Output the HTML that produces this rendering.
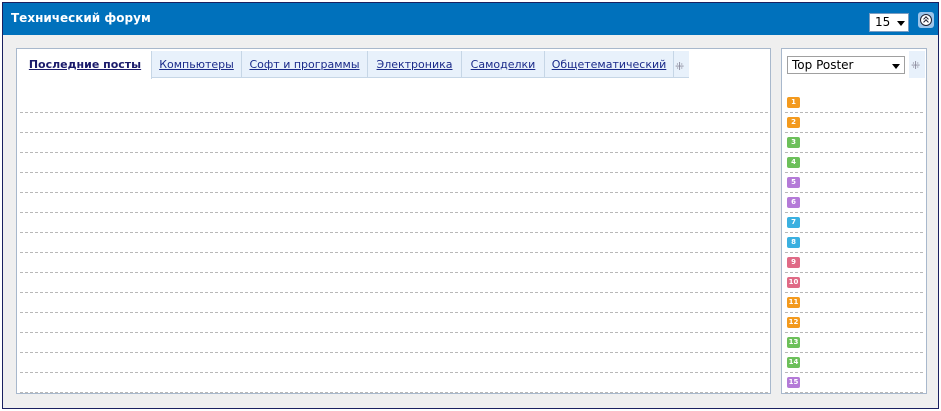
<!DOCTYPE html>
<html><head><meta charset="utf-8"><style>
*{margin:0;padding:0;box-sizing:border-box}
body{width:941px;height:411px;background:#fff;font-family:"DejaVu Sans","Liberation Sans",sans-serif;position:relative;overflow:hidden}
.outer{position:absolute;left:2px;top:2px;width:937px;height:407px;border:1px solid #1a2060;background:#efefef}
.hdr{position:absolute;left:0;top:0;width:935px;height:32px;background:#0071bc;color:#fff;font-weight:bold;font-size:12px;line-height:31px;padding-left:8px}
.sel{position:absolute;left:866px;top:10px;width:40px;height:19px;background:#fff;border:1px solid #7a9cc0;font-size:12px;color:#000;line-height:17px;padding-left:5px;font-weight:normal}
.arr{position:absolute;width:0;height:0;border-left:4px solid transparent;border-right:4px solid transparent;border-top:5px solid #000}
.up{position:absolute;left:915px;top:9px;width:16px;height:16px;background:#9cc4ea;border-radius:3px}
.up span{position:absolute;left:2px;top:2px;width:12px;height:12px;border-radius:50%;background:#fff;border:1px solid #223}
.up i{position:absolute;left:3px;width:4px;height:4px;border-left:1.5px solid #223;border-top:1.5px solid #223;transform:rotate(45deg)}
.pl{position:absolute;left:16px;top:48px;width:755px;height:346px;border:1px solid #a8b8cc;background:#fff}
.pr{position:absolute;left:781px;top:48px;width:146px;height:346px;border:1px solid #a8b8cc;background:#fff}
.tabs{position:absolute;left:2px;top:2px;width:670px;height:27px;background:#e8f1fb;border-bottom:1px solid #c6d6e6}
.tab{position:absolute;top:0;height:27px;border-right:1px solid #c6d6e6;font-size:11px;color:#1a2a8a;text-decoration:underline;line-height:27px;text-align:center;white-space:nowrap}
.act{background:#fff;font-weight:bold;color:#1a1a6a;height:28px}
.dl{position:absolute;height:0;border-top:1px dashed #b8b8b8}
.b{position:absolute;left:5px;width:13px;height:11px;border-radius:2px;color:#fff;font-size:7px;line-height:11px;text-align:center;font-weight:bold}
.spin{position:absolute;font-size:11px;color:#889}
</style></head><body>
<div class="outer">
<div class="hdr">Технический форум
<div class="sel">15<div class="arr" style="left:27px;top:7px"></div></div>
<div class="up"><span><i style="top:2px"></i><i style="top:5px"></i></span></div>
</div>
</div>
<div class="pl">
<div class="tabs">
<div class="tab act" style="left:0;width:133px">Последние посты</div>
<div class="tab" style="left:133px;width:90px">Компьютеры</div>
<div class="tab" style="left:223px;width:126px">Софт и программы</div>
<div class="tab" style="left:349px;width:94px">Электроника</div>
<div class="tab" style="left:443px;width:83px">Самоделки</div>
<div class="tab" style="left:526px;width:129px">Общетематический</div>
<div class="spin" style="left:656px;top:9px">⁜</div>
</div>
<div id="ll"></div>
</div>
<div class="pr">
<div style="position:absolute;left:5px;top:7px;width:118px;height:18px;border:1px solid #a0a0a0;font-size:12px;line-height:16px;padding-left:4px">Top Poster<div class="arr" style="left:104px;top:7px"></div></div>
<div style="position:absolute;left:127px;top:2px;width:16px;height:27px;background:#e8f1fb"></div>
<div class="spin" style="left:129px;top:10px">⁜</div>
<div id="rl"></div>
</div>
<script>
var l='',r='',c=['#f39a1e','#f39a1e','#6cc05a','#6cc05a','#b47ad8','#b47ad8','#3ab0e0','#3ab0e0','#e06a86','#e06a86','#f39a1e','#f39a1e','#6cc05a','#6cc05a','#b47ad8'];
for(var i=0;i<15;i++){var y=63+i*20;l+='<div class="dl" style="left:3px;width:748px;top:'+y+'px"></div>';r+='<div class="dl" style="left:3px;width:138px;top:'+y+'px"></div><div class="b" style="top:'+(48+i*20)+'px;background:'+c[i]+'">'+(i+1)+'</div>';}
document.getElementById('ll').innerHTML=l;document.getElementById('rl').innerHTML=r;
</script>
</body></html>
